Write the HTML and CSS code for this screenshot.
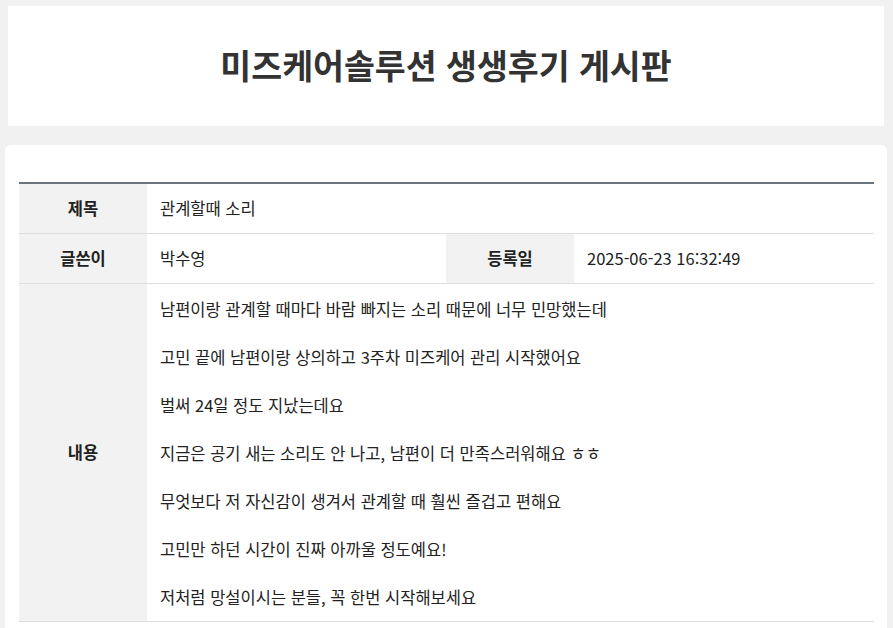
FILE: index.html
```html
<!DOCTYPE html>
<html lang="ko">
<head>
<meta charset="utf-8">
<title>미즈케어솔루션 생생후기 게시판</title>
<link rel="stylesheet" href="styles.css">
</head>
<body>
<header class="top">
  <h1 class="title">미즈케어솔루션 생생후기 게시판</h1>
</header>
<main class="card">
  <table class="view">
    <colgroup>
      <col class="c-th"><col class="c-td1"><col class="c-th"><col class="c-td2">
    </colgroup>
    <tr>
      <th>제목</th>
      <td colspan="3">관계할때 소리</td>
    </tr>
    <tr>
      <th>글쓴이</th>
      <td>박수영</td>
      <th>등록일</th>
      <td>2025-06-23 16:32:49</td>
    </tr>
    <tr>
      <th>내용</th>
      <td colspan="3" class="content">
        <p>남편이랑 관계할 때마다 바람 빠지는 소리 때문에 너무 민망했는데</p>
        <p>고민 끝에 남편이랑 상의하고 3주차 미즈케어 관리 시작했어요</p>
        <p>벌써 24일 정도 지났는데요</p>
        <p>지금은 공기 새는 소리도 안 나고, 남편이 더 만족스러워해요 ㅎㅎ</p>
        <p>무엇보다 저 자신감이 생겨서 관계할 때 훨씬 즐겁고 편해요</p>
        <p>고민만 하던 시간이 진짜 아까울 정도예요!</p>
        <p>저처럼 망설이시는 분들, 꼭 한번 시작해보세요</p>
      </td>
    </tr>
  </table>
</main>
</body>
</html>
```
FILE: styles.css
```css
* { box-sizing: border-box; }
html, body { margin: 0; padding: 0; }
body {
  background: #f1f1f1;
  font-family: "Noto Sans CJK KR", "Noto Sans", sans-serif;
  color: #222;
  padding-top: 6px;
}
.top {
  background: #fff;
  margin: 0 9px 0 8px;
  height: 120px;
  display: flex;
  align-items: center;
  justify-content: center;
}
.title {
  margin: 0;
  font-size: 33.6px;
  font-weight: 700;
  color: #333;
  letter-spacing: 0;
  line-height: 1.2;
  padding-bottom: 2px;
}
.card {
  background: #fff;
  margin: 19px 6px 0 5px;
  border-radius: 6px 6px 0 0;
  padding: 37px 13px 40px 14px;
}
.view {
  width: 855px;
  border-collapse: collapse;
  table-layout: fixed;
  border-top: 2px solid #6c757d;
  font-size: 16.5px;
}
.c-th { width: 128px; }
.c-td1 { width: 299px; }
.c-td2 { width: 300px; }
.view th, .view td {
  border-bottom: 1px solid #dedede;
  padding: 12px 13px;
  line-height: 25px;
  letter-spacing: 0;
  vertical-align: middle;
}
.view th {
  background: #f2f2f2;
  font-weight: 700;
  text-align: center;
  color: #222;
}
.view td { text-align: left; color: #222; }
.view td.content { padding: 13px 13px 12px; }
.content p {
  margin: 0 0 24px;
  line-height: 24px;
}
.content p:last-child { margin-bottom: 0; }
```
